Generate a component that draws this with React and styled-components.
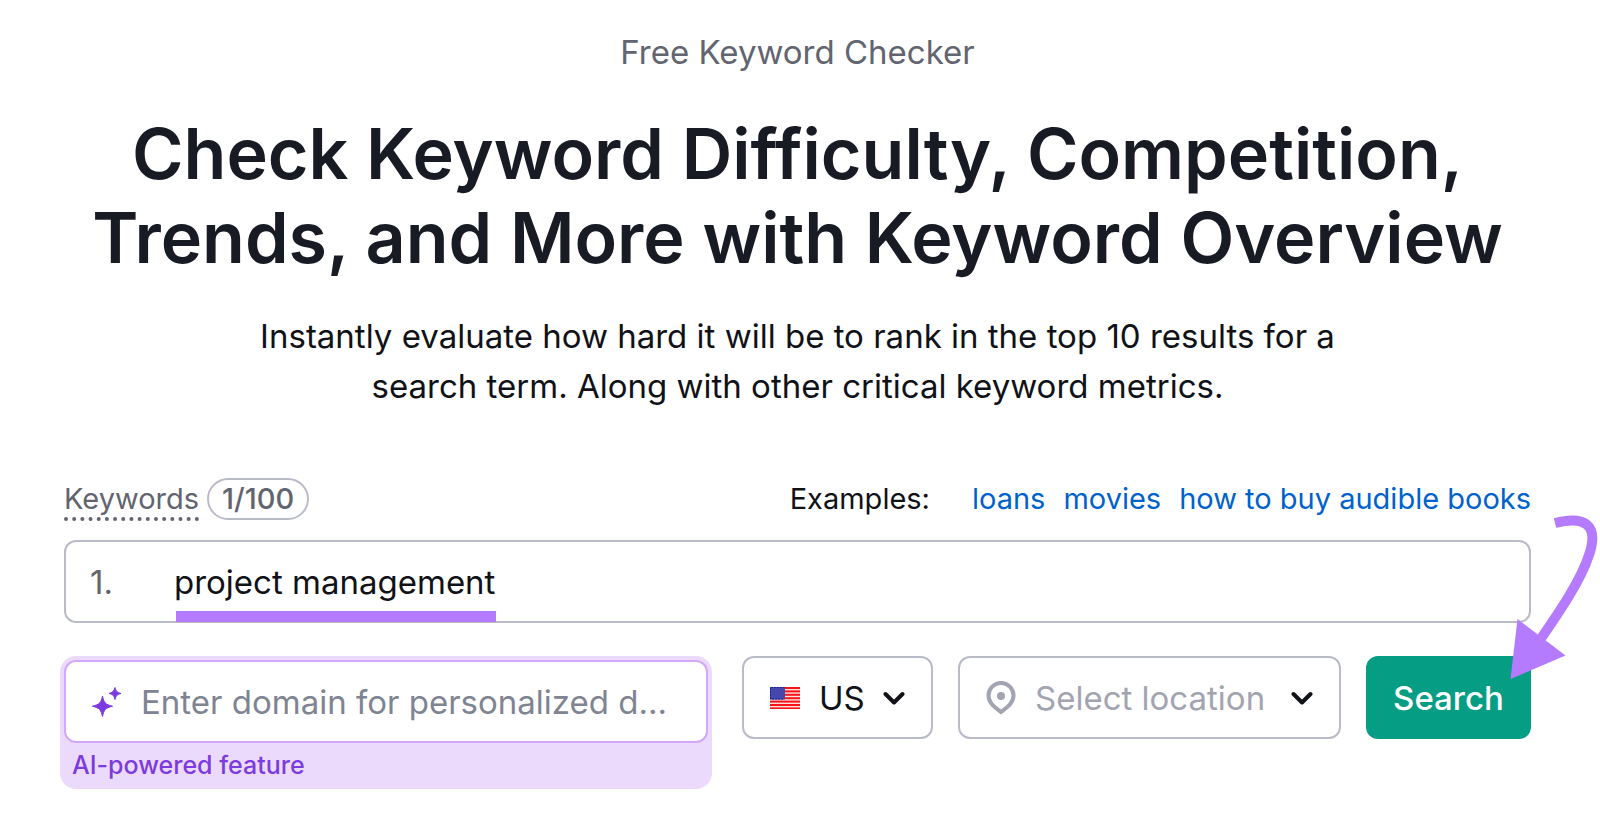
import React, { useState } from 'react';
import styled, { createGlobalStyle } from 'styled-components';

const GlobalStyle = createGlobalStyle`
  * {
    box-sizing: border-box;
  }

  body {
    margin: 0;
    background: #ffffff;
    color: #101218;
    font-family: Inter, 'Liberation Sans', sans-serif;
  }

  button,
  input,
  select {
    font-family: inherit;
  }
`;

const Page = styled.main`
  padding: 32px 69px 40px 64px;
  overflow: hidden;
`;

const Hero = styled.header`
  display: flex;
  flex-direction: column;
  align-items: center;
  text-align: center;
`;

const Eyebrow = styled.p`
  margin: 0;
  color: #62646f;
  font-size: 33px;
  line-height: 40px;
`;

const Title = styled.h1`
  margin: 40px 0 0;
  color: #181b23;
  font-size: 70px;
  font-weight: 600;
  line-height: 84px;
`;

const Lead = styled.p`
  margin: 31px 0 0;
  font-size: 33px;
  line-height: 50px;
`;

const Form = styled.form`
  margin-top: 66px;
`;

const LabelRow = styled.div`
  display: flex;
  align-items: center;
  justify-content: space-between;
`;

const LabelGroup = styled.div`
  display: flex;
  align-items: center;
  gap: 8px;
`;

const KeywordsLabel = styled.label`
  margin-top: 4px;
  border-bottom: 4px dotted #62646f;
  color: #62646f;
  font-size: 29px;
  line-height: 36px;
`;

const Counter = styled.span`
  padding: 0 13px;
  border: 2px solid #b9bbc8;
  border-radius: 21px;
  color: #62646f;
  font-size: 29px;
  font-weight: 500;
  line-height: 38px;
`;

const Examples = styled.div`
  display: flex;
  gap: 18px;
  font-size: 29px;
  line-height: 36px;
`;

const ExamplesTitle = styled.span`
  margin-right: 24px;
`;

const ExampleLink = styled.a`
  color: #0062cc;
  text-decoration: none;
`;

const KeywordRow = styled.div`
  position: relative;
  display: flex;
  align-items: center;
  height: 83px;
  margin-top: 19px;
  padding: 0 24px;
  border: 2px solid #b9bbc8;
  border-radius: 12px;
`;

const RowNumber = styled.label`
  width: 84px;
  color: #62646f;
  font-size: 33px;
`;

const KeywordInput = styled.input`
  flex: 1;
  min-width: 0;
  padding: 0;
  border: 0;
  outline: 0;
  background: transparent;
  color: #101218;
  font-size: 33px;
  line-height: 40px;
`;

const Highlight = styled.span`
  position: absolute;
  bottom: -1px;
  left: 110px;
  width: 320px;
  height: 11px;
  background: #b57bff;
`;

const Controls = styled.div`
  display: flex;
  align-items: flex-start;
  gap: 25px;
  margin-top: 33px;
`;

const AiBox = styled.div`
  flex: 1;
  min-width: 0;
  margin: 0 5px 0 -4px;
  padding: 4px 4px 7px;
  border-radius: 16px;
  background: #ecdafc;
`;

const DomainField = styled.div`
  display: flex;
  align-items: center;
  gap: 19px;
  height: 83px;
  padding: 0 30px 0 26px;
  border: 2px solid #d2a8fa;
  border-radius: 12px;
  background: #ffffff;
`;

const DomainInput = styled.input`
  flex: 1;
  min-width: 0;
  padding: 0;
  border: 0;
  outline: 0;
  background: transparent;
  font-size: 33px;
  line-height: 40px;

  &::placeholder {
    color: #7f8492;
    opacity: 1;
  }
`;

const AiCaption = styled.label`
  display: block;
  padding: 5px 8px 0;
  color: #7c3be0;
  font-size: 25px;
  font-weight: 500;
  line-height: 34px;
`;

const SelectWrap = styled.div`
  position: relative;
  width: ${(props) => props.$width};
`;

const Select = styled.select`
  width: 100%;
  height: 83px;
  padding: 0 48px 0 75px;
  border: 2px solid #b9bbc8;
  border-radius: 12px;
  appearance: none;
  background: #ffffff;
  color: ${(props) => (props.$muted ? '#a2a4b1' : '#101218')};
  font-size: 33px;
`;

const LeadingIcon = styled.span`
  position: absolute;
  top: 0;
  bottom: 0;
  left: 28px;
  display: flex;
  align-items: center;
  pointer-events: none;
`;

const TrailingIcon = styled(LeadingIcon)`
  right: 28px;
  left: auto;
`;

const SearchWrap = styled.div`
  position: relative;
`;

const SearchButton = styled.button`
  width: 165px;
  height: 83px;
  padding: 0;
  border: 0;
  border-radius: 12px;
  background: #059d83;
  color: #ffffff;
  font-size: 33px;
  font-weight: 500;
`;

const Arrow = styled.svg`
  position: absolute;
  top: -144px;
  right: -67px;
  pointer-events: none;
`;

const SparkleIcon = () => (
  <svg width='30' height='30' viewBox='0 0 30 30' fill='#7c3be0' aria-hidden='true'>
    <path
      d='M10.5 9C12 16 13.500 17.500 20.500 19.200C13.500 21 12 22.500 10.500 29.500C9 22.500 7.500 21 0.500 19.200C7.500 17.500 9 16 10.500 9Z'
      stroke='#7c3be0'
      strokeLinejoin='round'
    />
    <path
      d='M23 0.500C24 4.200 25 5.200 29 6.500C25 7.500 24 8.500 23 12.500C22 8.500 21 7.500 17 6.500C21 5.200 22 4.200 23 0.500Z'
      stroke='#7c3be0'
      strokeLinejoin='round'
    />
  </svg>
);

const FlagIcon = () => (
  <svg width='30' height='22' viewBox='0 0 30 22' aria-hidden='true'>
    <rect width='30' height='22' fill='#fbe3dc' />
    {[0, 3.4, 6.8, 10.2, 13.6, 17, 20.4].map((y) => (
      <rect key={y} y={y} width='30' height='2' fill='#fb1218' />
    ))}
    <rect width='15' height='12.500' fill='#4547ad' />
    <path
      d='M0.500 12V0.500H14.500M2 12H14'
      fill='none'
      stroke='#20229b'
      strokeDasharray='2 1'
    />
  </svg>
);

const PinIcon = () => (
  <svg width='30' height='34' viewBox='0 0 30 34' fill='none' aria-hidden='true'>
    <path
      d='M15 31C10 27 2.500 22.500 2.500 14.500A12.500 12.500 0 0 1 27.500 14.500C27.500 22.500 20 27 15 31Z'
      stroke='#a2a4b1'
      strokeWidth='4'
    />
    <circle cx='15' cy='15' r='4' fill='#a2a4b1' />
  </svg>
);

const ChevronIcon = () => (
  <svg width='22' height='14' viewBox='0 0 22 14' fill='none' aria-hidden='true'>
    <path
      d='M2.500 3L11 11.500L19.500 3'
      stroke='#101218'
      strokeWidth='4'
      strokeLinecap='round'
      strokeLinejoin='round'
    />
  </svg>
);

const ArrowDrawing = () => (
  <Arrow width='90' height='170' viewBox='0 0 90 170' aria-hidden='true'>
    <path
      d='M47 11C78 3 91 14 81 43C73 68 52 99 32 128'
      fill='none'
      stroke='#b57bff'
      strokeWidth='10'
    />
    <path d='M9.500 107L57.500 143.500L2.500 167Z' fill='#b57bff' />
  </Arrow>
);

const examples = ['loans', 'movies', 'how to buy audible books'];

const App = () => {
  const [keyword, setKeyword] = useState('project management');
  const [domain, setDomain] = useState('');

  const onSubmit = (event) => {
    event.preventDefault();
  };

  return (
    <Page>
      <GlobalStyle />
      <Hero>
        <Eyebrow>Free Keyword Checker</Eyebrow>
        <Title>
          Check Keyword Difficulty, Competition,
          <br />
          Trends, and More with Keyword Overview
        </Title>
        <Lead>
          Instantly evaluate how hard it will be to rank in the top 10 results for a
          <br />
          search term. Along with other critical keyword metrics.
        </Lead>
      </Hero>

      <Form onSubmit={onSubmit}>
        <LabelRow>
          <LabelGroup>
            <KeywordsLabel htmlFor='keyword'>Keywords</KeywordsLabel>
            <Counter>1/100</Counter>
          </LabelGroup>
          <Examples>
            <ExamplesTitle>Examples:</ExamplesTitle>
            {examples.map((example) => (
              <ExampleLink
                key={example}
                href='#keyword'
                onClick={() => setKeyword(example)}
              >
                {example}
              </ExampleLink>
            ))}
          </Examples>
        </LabelRow>

        <KeywordRow>
          <RowNumber htmlFor='keyword'>1.</RowNumber>
          <KeywordInput
            id='keyword'
            value={keyword}
            onChange={(event) => setKeyword(event.target.value)}
          />
          <Highlight />
        </KeywordRow>

        <Controls>
          <AiBox>
            <DomainField>
              <SparkleIcon />
              <DomainInput
                id='domain'
                placeholder='Enter domain for personalized d...'
                value={domain}
                onChange={(event) => setDomain(event.target.value)}
              />
            </DomainField>
            <AiCaption htmlFor='domain'>AI-powered feature</AiCaption>
          </AiBox>
          <SelectWrap $width='191px'>
            <Select aria-label='Country'>
              <option>US</option>
            </Select>
            <LeadingIcon>
              <FlagIcon />
            </LeadingIcon>
            <TrailingIcon>
              <ChevronIcon />
            </TrailingIcon>
          </SelectWrap>
          <SelectWrap $width='383px'>
            <Select aria-label='Location' $muted>
              <option>Select location</option>
            </Select>
            <LeadingIcon>
              <PinIcon />
            </LeadingIcon>
            <TrailingIcon>
              <ChevronIcon />
            </TrailingIcon>
          </SelectWrap>
          <SearchWrap>
            <SearchButton type='submit'>Search</SearchButton>
            <ArrowDrawing />
          </SearchWrap>
        </Controls>
      </Form>
    </Page>
  );
};

export default App;
